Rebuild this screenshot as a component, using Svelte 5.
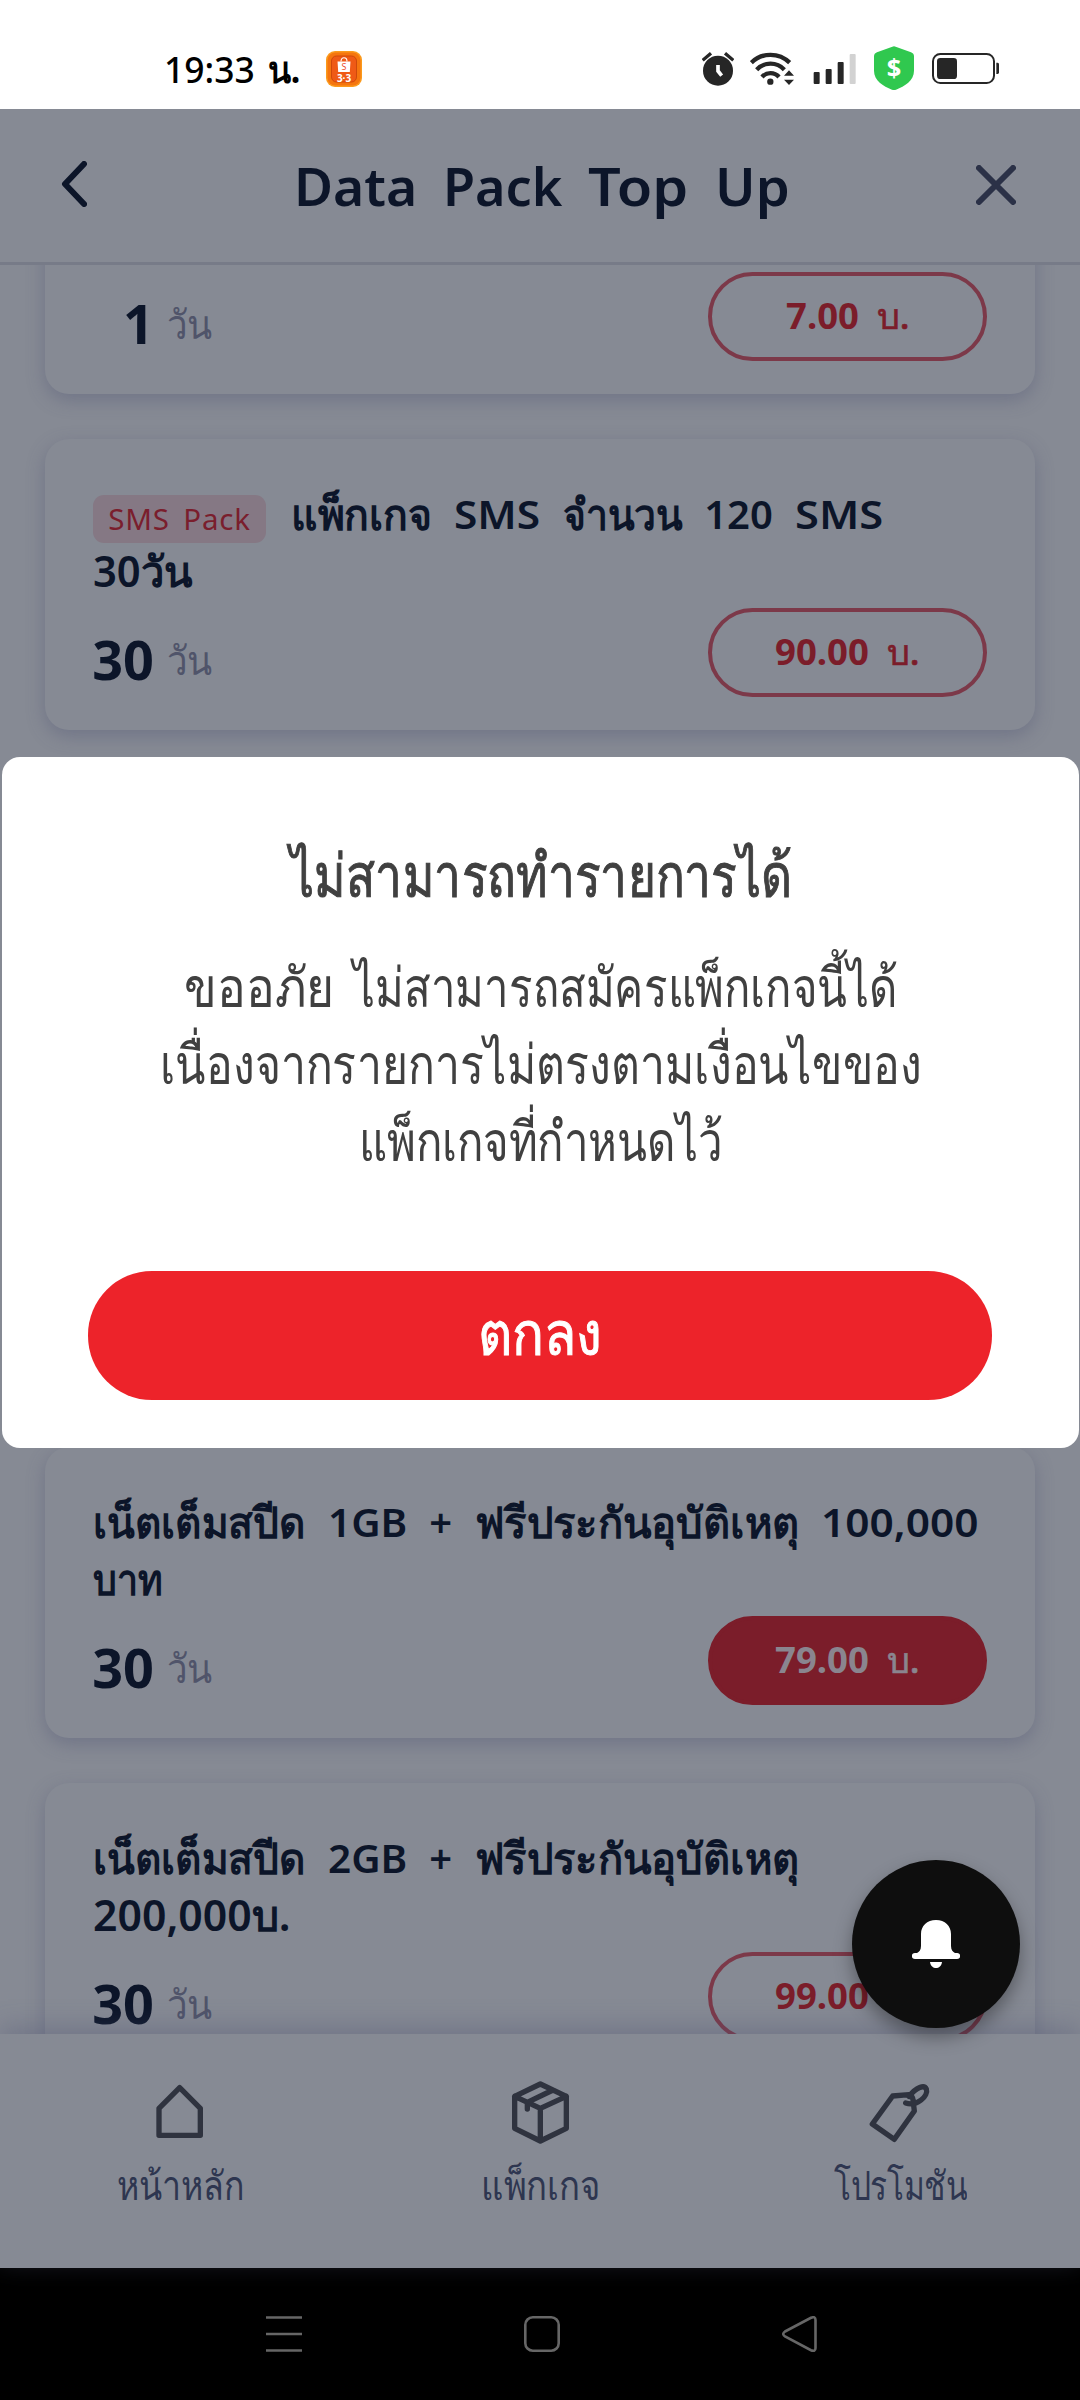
<script lang="ts">
  type Word = [text: string, width: number];
  type Pack = {
    tag?: string;
    lines: Word[][];
    days: Word;
    price: Word;
    filled?: boolean;
    spaced?: boolean;
  };

  const packs: Pack[] = [
    { lines: [], days: ["1", 31], price: ["7.00", 73] },
    {
      tag: "SMS Pack",
      lines: [
        [["แพ็กเกจ", 141], ["SMS", 86], ["จำนวน", 119], ["120", 69], ["SMS", 88]],
        [["30วัน", 99]],
      ],
      days: ["30", 62],
      price: ["90.00", 94],
    },
    {
      lines: [
        [["เน็ตเต็มสปีด", 212], ["1GB", 79], ["+", 23], ["ฟรีประกันอุบัติเหตุ", 324], ["100,000", 157]],
        [["บาท", 69]],
      ],
      days: ["30", 62],
      price: ["79.00", 94],
      filled: true,
      spaced: true,
    },
    {
      lines: [
        [["เน็ตเต็มสปีด", 212], ["2GB", 79], ["+", 23], ["ฟรีประกันอุบัติเหตุ", 324]],
        [["200,000บ.", 197]],
      ],
      days: ["30", 62],
      price: ["99.00", 94],
    },
  ];

  const message: Word[][] = [
    [["ขออภัย", 150], ["ไม่สามารถสมัครแพ็กเกจนี้ได้", 545]],
    [["เนื่องจากรายการไม่ตรงตามเงื่อนไขของ", 762]],
    [["แพ็กเกจที่กำหนดไว้", 364]],
  ];

  const isThai = (text: string) => /[\u0e00-\u0e7f]/.test(text);

  function fit(node: HTMLElement, width: number) {
    const natural = node.offsetWidth;
    node.style.transform = `scaleX(${width / natural})`;
    node.style.marginRight = `${width - natural}px`;
  }
</script>

{#snippet word(text: string, width: number)}
  <span class="word" class:thai={isThai(text)} use:fit={width}>{text}</span>
{/snippet}

<div class="phone">
  <div class="status">
    <div class="clock">{@render word("19:33", 91)}<b>{@render word("น.", 32)}</b></div>
    <svg class="app" width="36" height="36" viewBox="0 0 36 36">
      <rect width="36" height="36" rx="9" fill="#fb9a1c" />
      <rect x="1.500" y="1.500" width="33" height="33" rx="8" fill="#f5750f" />
      <rect x="5.500" y="5" width="25" height="26" rx="5" fill="#ef5a16" stroke="#cf480b" />
      <path d="M11.500 10.500h13l-.7 10.500h-11.600z" fill="#fff" />
      <path d="M15 10.500c0-5 6-5 6 0" fill="none" stroke="#fff" stroke-width="1.200" />
      <text x="18" y="19" font-size="9" text-anchor="middle" fill="#ee4d2d">S</text>
      <text x="18" y="30.500" font-size="10" font-weight="700" text-anchor="middle" fill="#fff">3·3</text>
    </svg>
    <div class="indicators">
      <svg width="32" height="44" viewBox="36 48 96 132">
        <circle cx="84" cy="122" r="45" fill="#262626" />
        <path d="M38 91 63 70M130 91 105 70" stroke="#262626" stroke-width="10" />
        <path d="M84 105v18l11 14" fill="none" stroke="#fff" stroke-width="11" />
      </svg>
      <svg width="44" height="44" viewBox="180 48 132 132">
        <g fill="none" stroke="#262626" stroke-width="13">
          <path d="M184 98a82 82 0 0 1 115 0" />
          <path d="M200 119a57 57 0 0 1 83 0" />
          <path d="M216 141a34 34 0 0 1 51 0" />
        </g>
        <circle cx="241" cy="155" r="9.500" fill="#262626" />
        <path d="M282 137 297 121 312 137zM282 149 297 165 312 149z" fill="#262626" />
      </svg>
      <svg width="43" height="44" viewBox="369 48 129 132">
        <g fill="#262626">
          <rect x="371" y="126" width="18" height="36" rx="3" />
          <rect x="407" y="117" width="18" height="45" rx="3" />
          <rect x="443" y="96" width="18" height="66" rx="3" />
        </g>
        <rect x="479" y="72" width="18" height="90" rx="3" fill="#d2d2d2" />
      </svg>
      <svg width="40" height="44" viewBox="552 48 120 132">
        <path d="M607 50q5-2 10 0l46 17q9 3 9 12v43c0 30-28 46-54 57q-6 2-12 0c-26-11-54-27-54-57V79q0-9 9-12z" fill="#30c84f" />
        <text x="612" y="141" font-size="76" font-weight="700" text-anchor="middle" fill="#fff">$</text>
      </svg>
      <svg width="67" height="44" viewBox="726 48 201 132">
        <rect x="729" y="72" width="183" height="87" rx="22" fill="none" stroke="#262626" stroke-width="6" />
        <rect x="741" y="84" width="60" height="63" rx="10" fill="#262626" />
        <path d="M919 98h4q4 0 4 5v24q0 5-4 5h-4z" fill="#262626" />
      </svg>
    </div>
  </div>

  <header>
    <svg width="26" height="46" viewBox="0 0 26 46" fill="none" stroke="#0c1529" stroke-width="6" stroke-linecap="round" stroke-linejoin="round">
      <path d="M23 3 4 23 23 43" />
    </svg>
    <h1>{@render word("Data", 123)}{@render word("Pack", 119)}{@render word("Top", 100)}{@render word("Up", 75)}</h1>
    <svg width="40" height="40" viewBox="0 0 40 40" fill="none" stroke="#2b3147" stroke-width="6" stroke-linecap="round">
      <path d="M3 3 37 37M37 3 3 37" />
    </svg>
  </header>

  <main>
    {#each packs as pack}
      <article class="card" class:spaced={pack.spaced}>
        <div class="title">
          {#each pack.lines as line, i}
            <div class="line">
              {#if i === 0 && pack.tag}
                <span class="tag">{pack.tag}</span>
              {/if}
              {#each line as [text, width]}{@render word(text, width)}{/each}
            </div>
          {/each}
        </div>
        <div class="row">
          <div class="days">{@render word(pack.days[0], pack.days[1])}</div>
          <div class="unit">{@render word("วัน", 45)}</div>
          <button class="price" class:filled={pack.filled}>
            <b>{@render word(pack.price[0], pack.price[1])}</b>
            <span class="baht">{@render word("บ.", 33)}</span>
          </button>
        </div>
      </article>
    {/each}
  </main>

  <nav>
    <a href="#home">
      <svg width="90" height="90" viewBox="0 0 270 270">
        <path d="M134 68 196 130V211H72V130z" />
      </svg>
      {@render word("หน้าหลัก", 127)}
    </a>
    <a href="#packages">
      <svg width="90" height="90" viewBox="-12 0 270 270">
        <path d="M124 57 202 94V190L124 228 47 190V94zM47 94 124 130 202 94M124 130V228M162 75 85 112V132" />
      </svg>
      {@render word("แพ็กเกจ", 119)}
    </a>
    <a href="#promotions">
      <svg width="90" height="90" viewBox="-2 0 270 270">
        <path d="M111 93 160 89Q171 93 172 104L176 138 116 223 50 177zM160 94C182 66 206 58 212 72 219 92 184 126 150 114" />
      </svg>
      {@render word("โปรโมชัน", 133)}
    </a>
  </nav>

  <footer>
    <svg width="36" height="36" viewBox="0 0 36 36"><path d="M0 1.500H36M0 18H36M0 34.500H36" /></svg>
    <svg width="36" height="36" viewBox="0 0 36 36"><rect x="1.300" y="1.300" width="33.400" height="33.400" rx="7.500" /></svg>
    <svg width="36" height="36" viewBox="0 0 36 36"><path d="M3 15.500 29 1.800Q33.500 0 33.500 4V32Q33.500 36 29 34.200L3 20.500Q-.5 18 3 15.500z" /></svg>
  </footer>

  <div class="dialog" role="alertdialog">
    <h2>{@render word("ไม่สามารถทำรายการได้", 502)}</h2>
    <div class="message">
      {#each message as line}
        <p>{#each line as [text, width]}{@render word(text, width)}{/each}</p>
      {/each}
    </div>
    <button class="ok">{@render word("ตกลง", 124)}</button>
  </div>

  <button class="bell" aria-label="notifications">
    <svg width="48" height="48" viewBox="0 0 48 48" fill="#fff">
      <path d="M24 0c9 0 15 6 15 14v12c0 4 2 6 4 7h2.200a2.800 2.800 0 0 1 0 6H2.800a2.800 2.800 0 0 1 0-6H5c2-1 4-3 4-7V14C9 6 15 0 24 0z" />
      <path d="M18 42h12c-1 8-11 8-12 0z" />
    </svg>
  </button>
</div>

<style>
  .phone {
    position: relative;
    width: 1080px; height: 2400px; overflow: hidden;
    display: flex; flex-direction: column;
    background: #868a94; color: #0c1529;
    font-family: "Noto Sans", sans-serif; font-size: 40px;
  }
  svg { display: block; flex-shrink: 0; }
  h1, h2, p { margin: 0; }
  button { border: none; padding: 0; font-family: inherit; color: inherit; }
  .word { display: inline-block; white-space: nowrap; transform-origin: 0 50%; }

  .status {
    height: 109px; flex-shrink: 0; box-sizing: border-box;
    display: flex; align-items: flex-start;
    padding: 46px 81px 0 164px; background: #fff; color: #000;
  }
  .clock { display: flex; gap: 13px; width: 137px; height: 44px; font-size: 37px; line-height: 46px; font-weight: 500; }
  .app { margin: 5px 0 0 25px; }
  .indicators { display: flex; margin-left: auto; }
  .indicators svg:nth-child(2) { margin-left: 16px; }
  .indicators svg:nth-child(3) { margin-left: 19px; }
  .indicators svg:nth-child(n + 4) { margin-left: 18px; }

  header {
    height: 156px; flex-shrink: 0; box-sizing: border-box;
    display: flex; align-items: center; justify-content: space-between;
    padding: 0 64px 3px 61px; border-bottom: 3px solid #777b88;
  }
  h1 { display: flex; gap: 26px; font-size: 53px; font-weight: 600; line-height: 76px; margin: 4px 0 0 20px; }
  header svg:last-child { margin-top: 2px; }

  main { flex: 1; min-height: 0; overflow: hidden; padding: 0 45px; }
  .card {
    height: 291px; box-sizing: border-box; margin-bottom: 45px; padding: 46px 48px 0;
    border-radius: 24px; background: #868a94;
    box-shadow: 0 6px 18px rgba(80, 86, 115, .4);
  }
  .card:first-child { margin-top: -162px; }
  .card.spaced { margin-top: 717px; }
  .title { height: 114px; font-weight: 600; line-height: 57px; }
  .line { display: flex; gap: 22.5px; height: 57px; }
  .title .thai { font-size: 43px; }
  .tag {
    width: 173px; height: 48px; box-sizing: border-box; margin: 10px 2px 0 0;
    border-radius: 11px; background: #857884; color: #7a1e2d;
    font-size: 29.5px; font-weight: 400; line-height: 47px; text-align: center;
    letter-spacing: .8px; word-spacing: 5px; white-space: nowrap;
  }
  .row { display: flex; height: 89px; margin-top: 9px; }
  .days {
    display: flex; justify-content: flex-end;
    width: 61px; margin-top: 7px;
    font-size: 54px; font-weight: 700; line-height: 89px;
  }
  .unit { margin: 7px 0 0 13px; line-height: 89px; font-weight: 300; color: #50546a; }
  .price {
    display: flex; justify-content: center; gap: 18px;
    width: 279px; height: 89px; box-sizing: border-box; margin-left: auto;
    border: 4px solid #7c3949; border-radius: 45px; background: none;
    color: #7b1d2a; font-size: 35px; line-height: 79px;
  }
  .price.filled { background: #7b1d2a; border-color: #7b1d2a; color: #8a858f; }
  .baht { font-weight: 500; -webkit-text-stroke: .6px; }

  nav {
    position: relative; height: 234px; flex-shrink: 0; box-sizing: border-box;
    display: grid; grid-template-columns: repeat(3, 360px); padding-top: 31px;
    background: #868a94; box-shadow: 0 -6px 24px rgba(80, 86, 115, .4);
  }
  nav a { display: flex; flex-direction: column; align-items: center; color: #2e3650; text-decoration: none; line-height: 60px; }
  nav svg { fill: none; stroke: #2f333f; stroke-width: 16; stroke-linejoin: round; stroke-linecap: round; }

  footer {
    height: 132px; flex-shrink: 0; display: flex; align-items: center; gap: 222px;
    padding-left: 266px; background: #000;
  }
  footer svg { fill: none; stroke: #666; stroke-width: 2.600; }

  .dialog {
    position: absolute; left: 2px; top: 757px; width: 1077px; height: 691px; box-sizing: border-box;
    padding-top: 75px; border-radius: 18px; background: #fff; color: #404040;
    display: flex; flex-direction: column; align-items: center;
  }
  h2 { font-size: 60px; font-weight: 500; line-height: 84px; -webkit-text-stroke: 1px; }
  .message { margin-top: 32px; font-size: 55px; font-weight: 300; line-height: 75px; }
  .message p { display: flex; justify-content: center; gap: 19px; height: 77px; }
  .ok {
    display: flex; justify-content: center;
    width: 904px; height: 129px; margin: 92px 1px 0 0; border-radius: 64px;
    background: #ed232a; color: #fff; font-size: 60px; font-weight: 500; line-height: 122px;
    -webkit-text-stroke: 1px;
  }

  .bell {
    position: absolute; left: 852px; top: 1860px; width: 168px; height: 168px; border-radius: 50%;
    display: flex; align-items: center; justify-content: center;
    background: #0e0e0e; box-shadow: 0 9px 18px rgba(0, 0, 0, .35);
  }
</style>
